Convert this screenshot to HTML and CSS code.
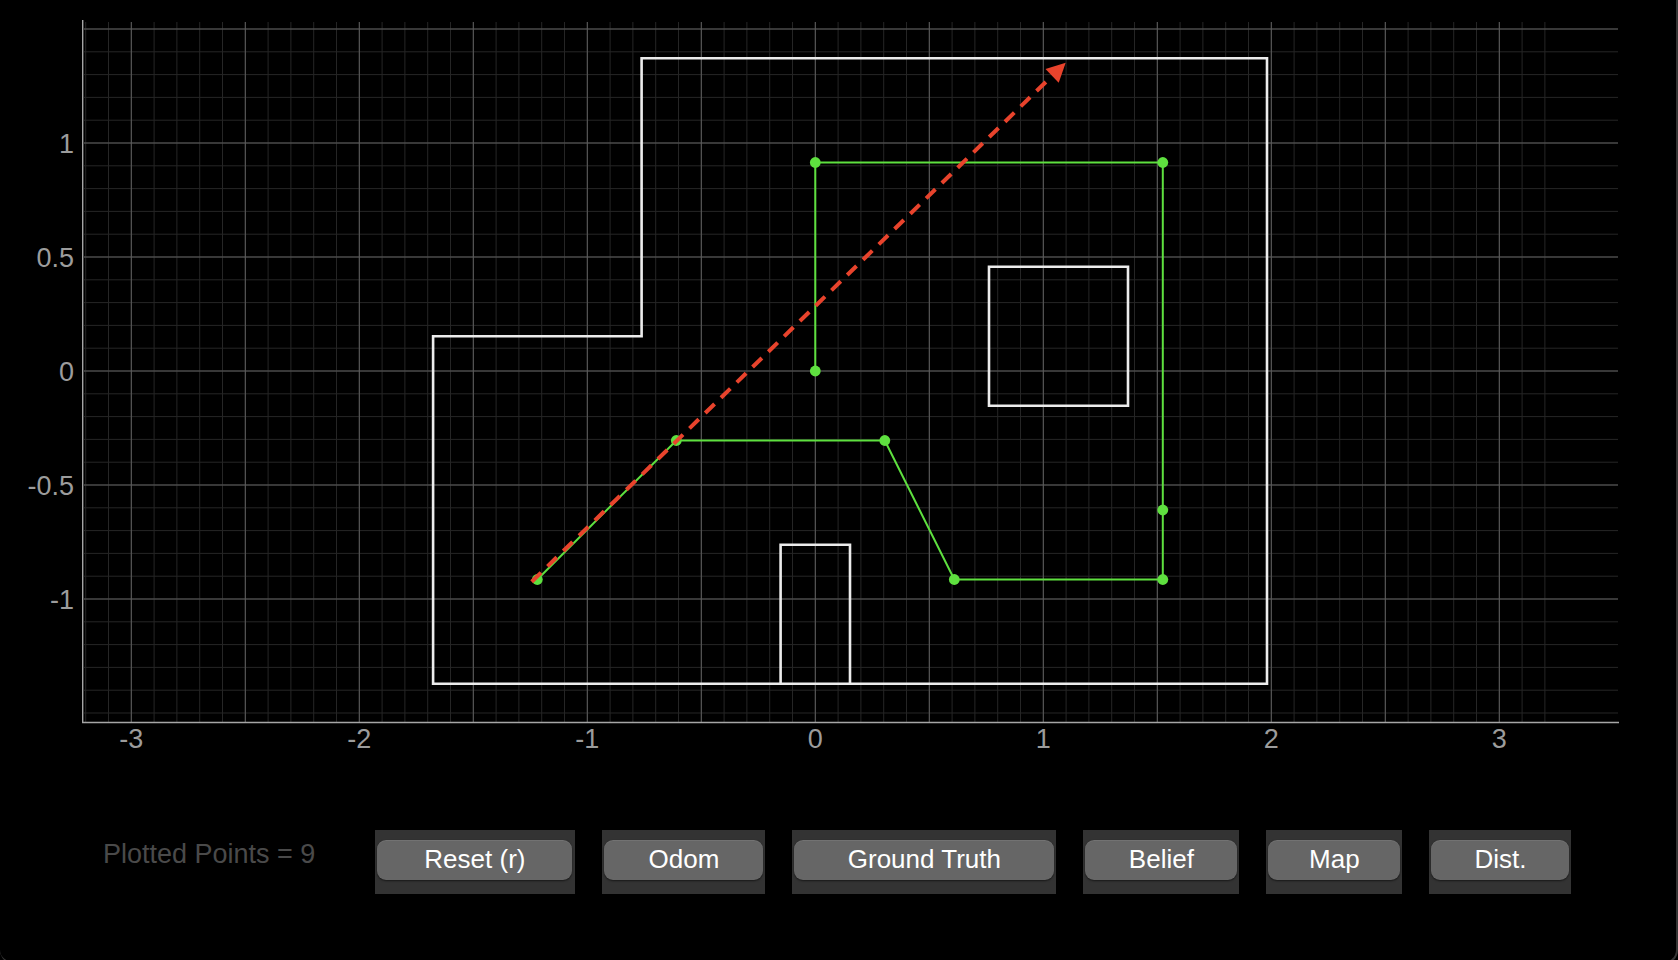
FILE: index.html
```html
<!DOCTYPE html>
<html lang="en">
<head>
<meta charset="utf-8">
<title>Trajectory Plotter</title>
<link rel="stylesheet" href="styles.css">
</head>
<body>
<div class="window">
  <svg class="plot" width="1678" height="770" viewBox="0 0 1678 770" xmlns="http://www.w3.org/2000/svg">
    <g class="grid-minor" fill="none">
      <path d="M85.7 22v700m22.8-700v700m22.8-700v700m22.8-700v700m22.8-700v700m22.8-700v700m22.8-700v700m22.8-700v700m22.8-700v700m22.8-700v700m22.8-700v700m22.8-700v700m22.8-700v700m22.8-700v700m22.8-700v700m22.8-700v700m22.8-700v700m22.8-700v700m22.8-700v700m22.8-700v700m22.8-700v700m22.8-700v700m22.8-700v700m22.8-700v700m22.8-700v700m22.8-700v700m22.8-700v700m22.8-700v700m22.8-700v700m22.8-700v700m22.8-700v700m22.8-700v700m22.8-700v700m22.8-700v700m22.8-700v700m22.8-700v700m22.8-700v700m22.8-700v700m22.8-700v700m22.8-700v700m22.8-700v700m22.8-700v700m22.8-700v700m22.8-700v700m22.8-700v700m22.8-700v700m22.8-700v700m22.8-700v700m22.8-700v700m22.8-700v700m22.8-700v700m22.8-700v700m22.8-700v700m22.8-700v700m22.8-700v700m22.8-700v700m22.8-700v700m22.8-700v700m22.8-700v700m22.8-700v700m22.8-700v700m22.8-700v700m22.8-700v700m22.8-700v700m22.8-700v700"/>
      <path d="M84 29h1534m-1534 22.8h1534m-1534 22.8h1534m-1534 22.8h1534m-1534 22.8h1534m-1534 22.8h1534m-1534 22.8h1534m-1534 22.8h1534m-1534 22.8h1534m-1534 22.8h1534m-1534 22.8h1534m-1534 22.8h1534m-1534 22.8h1534m-1534 22.8h1534m-1534 22.8h1534m-1534 22.8h1534m-1534 22.8h1534m-1534 22.8h1534m-1534 22.8h1534m-1534 22.8h1534m-1534 22.8h1534m-1534 22.8h1534m-1534 22.8h1534m-1534 22.8h1534m-1534 22.8h1534m-1534 22.8h1534m-1534 22.8h1534m-1534 22.8h1534m-1534 22.8h1534m-1534 22.8h1534m-1534 22.8h1534"/>
    </g>
    <g class="grid-major" fill="none">
      <path d="M131.3 22v700M245.3 22v700M359.3 22v700M473.3 22v700M587.3 22v700M701.3 22v700M815.3 22v700M929.3 22v700M1043.3 22v700M1157.3 22v700M1271.3 22v700M1385.3 22v700M1499.3 22v700"/>
      <path d="M84 29h1534M84 143h1534M84 257h1534M84 371h1534M84 485h1534M84 599h1534"/>
    </g>
    <g class="axis" fill="none">
      <path d="M82.7 20V722.5H1619"/>
    </g>
    <g class="tick-labels">
      <text x="74" y="152.7" text-anchor="end">1</text>
      <text x="74" y="266.7" text-anchor="end">0.5</text>
      <text x="74" y="380.7" text-anchor="end">0</text>
      <text x="74" y="494.7" text-anchor="end">-0.5</text>
      <text x="74" y="608.7" text-anchor="end">-1</text>
      <text x="131.3" y="748.3" text-anchor="middle">-3</text>
      <text x="359.3" y="748.3" text-anchor="middle">-2</text>
      <text x="587.3" y="748.3" text-anchor="middle">-1</text>
      <text x="815.3" y="748.3" text-anchor="middle">0</text>
      <text x="1043.3" y="748.3" text-anchor="middle">1</text>
      <text x="1271.3" y="748.3" text-anchor="middle">2</text>
      <text x="1499.3" y="748.3" text-anchor="middle">3</text>
    </g>
    <g class="walls" fill="none">
      <path d="M433.1 683.7V336.3H641.6V58.3H1267V683.7Z"/>
      <path d="M989 266.8H1128V405.7H989Z"/>
      <path d="M780.6 683.7V544.7H850V683.7"/>
    </g>
    <g class="path-line" fill="none">
      <path d="M537.3 579.5L676.3 440.5H884.8L954.3 579.5H1162.8V510V162.5H815.3V371"/>
    </g>
    <g class="path-dots">
      <circle cx="537.3" cy="579.5" r="5.4"/>
      <circle cx="676.3" cy="440.5" r="5.4"/>
      <circle cx="884.8" cy="440.5" r="5.4"/>
      <circle cx="954.3" cy="579.5" r="5.4"/>
      <circle cx="1162.8" cy="579.5" r="5.4"/>
      <circle cx="1162.8" cy="510" r="5.4"/>
      <circle cx="1162.8" cy="162.5" r="5.4"/>
      <circle cx="815.3" cy="162.5" r="5.4"/>
      <circle cx="815.3" cy="371" r="5.4"/>
    </g>
    <g class="heading">
      <path class="heading-line" d="M531.7 581.7L1052.1 75.9" fill="none"/>
      <path class="heading-tip" d="M1065.7 62.7L1045.5 69.1L1058.7 82.7Z"/>
    </g>
  </svg>
  <div class="controls">
    <span class="count">Plotted Points = 9</span>
    <div class="cell cell-reset"><button class="btn">Reset (r)</button></div>
    <div class="cell cell-odom"><button class="btn">Odom</button></div>
    <div class="cell cell-gt"><button class="btn">Ground Truth</button></div>
    <div class="cell cell-belief"><button class="btn">Belief</button></div>
    <div class="cell cell-map"><button class="btn">Map</button></div>
    <div class="cell cell-dist"><button class="btn">Dist.</button></div>
  </div>
</div>
</body>
</html>
```
FILE: styles.css
```css
html, body {
  margin: 0;
  padding: 0;
  background: #000;
  overflow: hidden;
}

body {
  font-family: "Liberation Sans", Arial, sans-serif;
}

.window {
  width: 1678px;
  height: 964px;
  box-sizing: border-box;
  background: #000;
  border-right: 2px solid #363636;
  border-bottom: 2px solid #363636;
  border-bottom-right-radius: 14px;
  border-bottom-left-radius: 14px;
}

.plot {
  display: block;
}

.grid-minor path {
  stroke: #262626;
  stroke-width: 1;
}

.grid-major path {
  stroke: #5e5e5e;
  stroke-width: 1;
}

.axis path {
  stroke: #a6a6a6;
  stroke-width: 1.4;
}

.tick-labels text {
  font-family: "Liberation Sans", Arial, sans-serif;
  font-size: 27px;
  fill: #9c9c9c;
}

.walls path {
  stroke: #ececec;
  stroke-width: 2.6;
}

.path-line path {
  stroke: #5ee03f;
  stroke-width: 2;
}

.path-dots circle {
  fill: #5ee03f;
}

.heading-line {
  stroke: #e8432c;
  stroke-width: 4;
  stroke-dasharray: 13 9;
}

.heading-tip {
  fill: #e8432c;
}

.controls {
  display: flex;
  align-items: center;
  gap: 27px;
  margin-top: 60px;
  padding-left: 103px;
}

.count {
  align-self: flex-start;
  margin-top: 9px;
  font-size: 27px;
  color: #4a4a4a;
  margin-right: 33px;
  white-space: nowrap;
}

.cell {
  height: 64px;
  box-sizing: border-box;
  padding: 10px 2px 14px;
  background: #333;
  display: flex;
}

.cell-reset { width: 200px; padding-right: 3px; }
.cell-odom { width: 163px; }
.cell-gt { width: 264px; }
.cell-belief { width: 156px; }
.cell-map { width: 136px; }
.cell-dist { width: 142px; }

.btn {
  flex: 1;
  height: 40px;
  margin: 0;
  padding: 0 0 2px;
  border: none;
  border-radius: 9px;
  background: #666;
  color: #fff;
  font-family: "Liberation Sans", Arial, sans-serif;
  font-size: 26px;
  line-height: 38px;
  box-shadow: 0 1px 2px rgba(0, 0, 0, 0.55), inset 0 1px 0 rgba(255, 255, 255, 0.08);
  cursor: pointer;
}
```
